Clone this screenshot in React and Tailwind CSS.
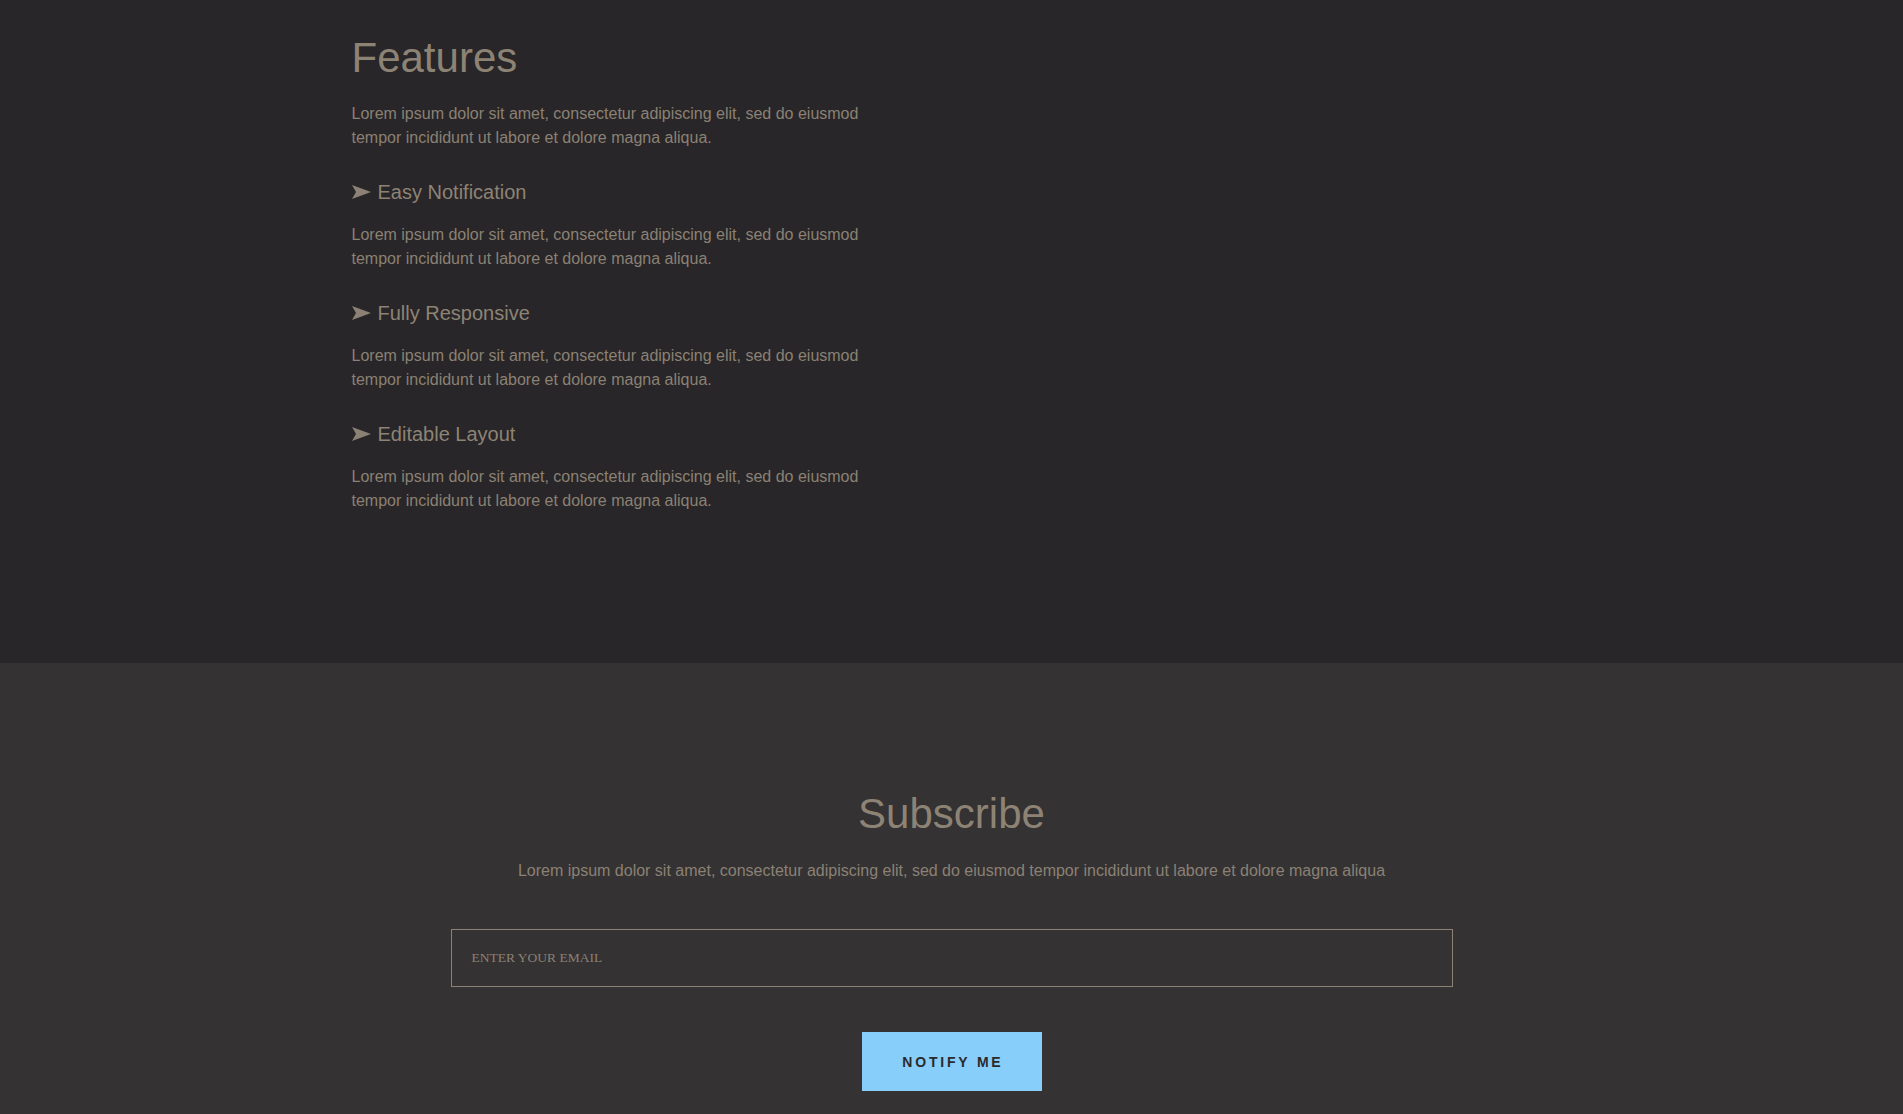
import React from "react";

const lorem =
  "Lorem ipsum dolor sit amet, consectetur adipiscing elit, sed do eiusmod tempor incididunt ut labore et dolore magna aliqua.";

const features = ["Easy Notification", "Fully Responsive", "Editable Layout"];

const Arrow = () => (
  <svg width="19" height="14" viewBox="0 0 19 14" className="shrink-0">
    <path d="M0 0 L19 7 L0 14 L4 7 Z" fill="#8b8174" />
  </svg>
);

const App = () => {
  return (
    <div className="font-['Liberation_Sans',Arial,sans-serif] text-[#8b8174]">
      {/* Features */}
      <section className="h-[663px] bg-[#282628] pt-[33px]">
        <div className="w-[1200px] mx-auto">
          <div className="w-[540px]">
            <h2 className="text-[42px] leading-[50px] mb-[19px] text-[#8d8375]">Features</h2>
            <p className="text-base leading-6 mb-[30px]">{lorem}</p>

            {features.map((f) => (
              <div key={f}>
                <h3 className="flex items-center gap-[7px] text-[20px] leading-6 mb-[19px] text-[#8d8375]">
                  <Arrow />
                  <span>{f}</span>
                </h3>
                <p className="text-base leading-6 mb-[30px]">{lorem}</p>
              </div>
            ))}
          </div>
        </div>
      </section>

      {/* Subscribe */}
      <section className="h-[451px] overflow-hidden bg-[#343233] pt-[126px] flex flex-col items-center">
        <h2 className="text-[42px] leading-[50px] mb-5 text-[#8d8375]">Subscribe</h2>
        <p className="text-base leading-6 mb-[46px]">
          Lorem ipsum dolor sit amet, consectetur adipiscing elit, sed do eiusmod tempor incididunt ut labore et dolore magna aliqua
        </p>
        <input
          type="email"
          placeholder="ENTER YOUR EMAIL"
          className="w-[1002px] h-[58px] shrink-0 border border-[#8b8174] bg-transparent px-5 font-['Liberation_Serif',serif] text-[13.5px] text-[#8b8174] placeholder:text-[#8b8174] outline-none"
        />
        <button className="mt-[45px] w-[180px] h-[59px] shrink-0 bg-[#87cefa] text-[#2b2a2b] text-[14px] font-bold tracking-[0.2em] pl-[0.2em] pt-[2px]">
          NOTIFY ME
        </button>
      </section>
    </div>
  );
};

export default App;
